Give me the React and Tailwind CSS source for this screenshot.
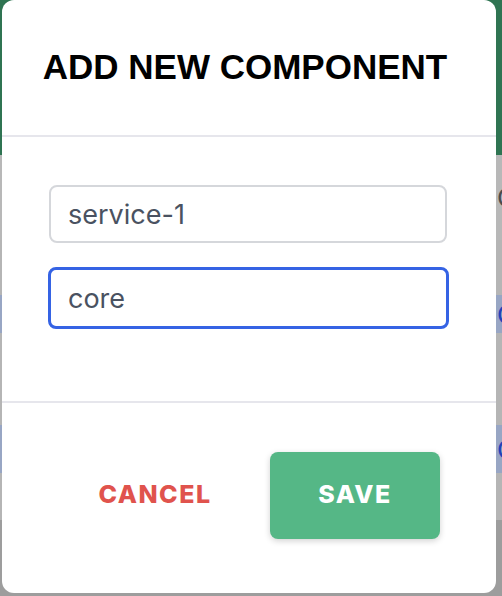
import React from "react";

function BackRow({ className, children }) {
  return (
    <div className={"flex items-center pl-[497px] text-[26px] " + className}>
      {children}
    </div>
  );
}

export default function App() {
  return (
    <div className="relative h-[596px] w-[502px] overflow-hidden bg-[#b5b5b5] font-['Inter',sans-serif]">
      {/* page behind the dimmed overlay */}
      <div className="flex flex-col">
        <div className="h-[155px] bg-[#2f7452]" />
        <BackRow className="h-[85px] bg-[#b8b8b8] text-[#4b4b4b]">C</BackRow>
        <div className="h-[55px]" />
        <BackRow className="h-[38px] bg-[#98a6c4] text-[#2340b8]">C</BackRow>
        <div className="h-[92px]" />
        <BackRow className="h-[48px] bg-[#98a6c4] text-[#2340b8]">C</BackRow>
        <div className="h-[47px]" />
        <div className="h-[76px] bg-[#9d9d9d]" />
      </div>

      {/* modal */}
      <div className="absolute left-[2px] top-0 flex h-[593px] w-[494px] flex-col rounded-[12px] bg-white">
        <div className="flex h-[137px] items-center justify-center border-b-2 border-[#e6e6ec] pr-[8px] pb-[3px]">
          <h2 className="font-['Liberation_Sans',Arial,sans-serif] text-[35px] font-bold leading-none text-black">
            ADD NEW COMPONENT
          </h2>
        </div>

        <div className="flex h-[266px] flex-col gap-[24px] border-b-2 border-[#e6e6ec] px-[47px] pt-[48px]">
          <input
            defaultValue="service-1"
            className="h-[58px] w-[398px] rounded-[8px] border-2 border-[#d5d7db] px-[17px] text-[27px] text-[#4a5261] outline-none"
          />
          <input
            defaultValue="core"
            className="h-[62px] w-[401px] -ml-[1px] rounded-[8px] border-[3px] border-[#3563e4] px-[17px] text-[27px] text-[#4a5261] outline-none"
          />
        </div>

        <div className="flex flex-1 items-center justify-end gap-[30px] pr-[56px] pb-[6px]">
          <button className="h-[87px] w-[170px] text-[25px] font-extrabold tracking-[1.5px] text-[#e0534d]">
            CANCEL
          </button>
          <button className="h-[87px] w-[170px] rounded-[8px] bg-[#55b786] text-[25px] font-extrabold tracking-[1.5px] text-white shadow-[0_2px_6px_rgba(0,0,0,0.18)]">
            SAVE
          </button>
        </div>
      </div>
    </div>
  );
}
